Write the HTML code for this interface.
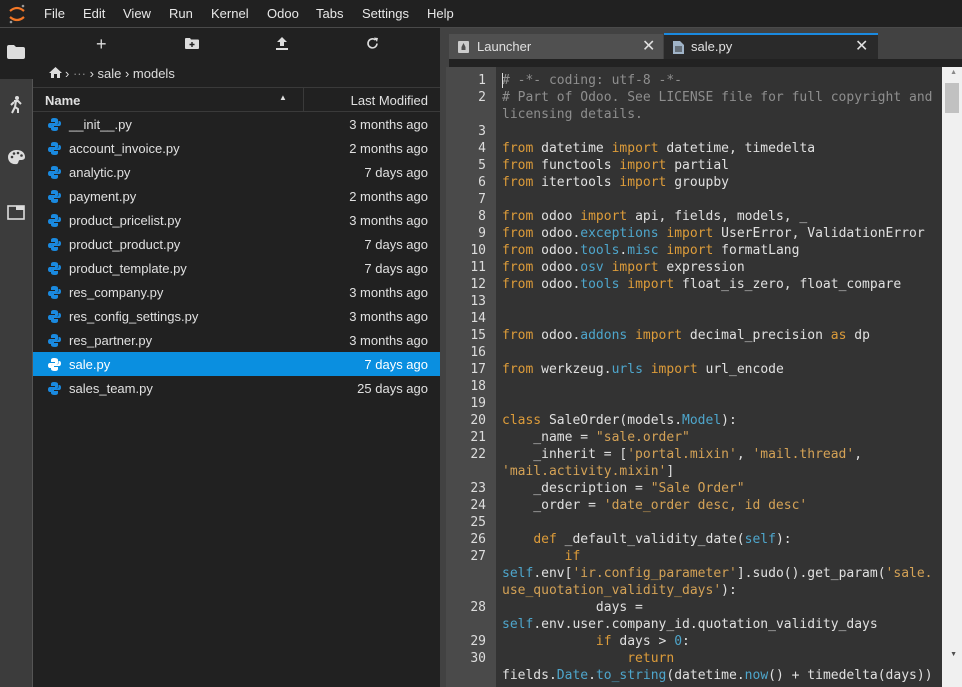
<!DOCTYPE html>
<html><head><meta charset="utf-8"><style>
*{margin:0;padding:0;box-sizing:border-box}
body{width:962px;height:687px;overflow:hidden;background:#212121;font-family:"Liberation Sans",sans-serif;color:#e0e0e0;position:relative}
.menu{position:absolute;left:0;top:0;width:962px;height:28px;background:#212121;border-bottom:1px solid #4a4a4a}
.menu span{position:absolute;top:6px;font-size:13px;color:#e8e8e8}
.lbar{position:absolute;left:0;top:28px;width:33px;height:659px;background:#3c3c3c;border-right:1px solid #555}
.lbar .act{position:absolute;left:0;top:0;width:33px;height:51px;background:#212121}
.fb{position:absolute;left:33px;top:28px;width:407px;height:659px;background:#212121}
.div{position:absolute;left:440px;top:28px;width:6px;height:659px;background:#424242}
.tabs{position:absolute;left:446px;top:28px;width:516px;height:39px;background:#424242}
.tab{position:absolute;top:5px;height:27px;font-size:13px;color:#e0e0e0}
.ed{position:absolute;left:446px;top:67px;width:516px;height:620px;background:#333}
.gut{position:absolute;left:0;top:0;width:50px;height:620px;background:#4a4a4a}
.code{position:absolute;left:56px;top:4.5px;font-family:"DejaVu Sans Mono",monospace;font-size:13px;line-height:17px;white-space:pre;color:#e0e0e0}
.nums{position:absolute;left:0;top:4.5px;width:40px;text-align:right;font-family:"DejaVu Sans Mono",monospace;font-size:13px;line-height:17px;white-space:pre;color:#ddd}
.k{color:#dd9c3a}.s{color:#d4a256}.c{color:#8e8e8e}.b{color:#4ea6cc}
.row{position:absolute;left:0;width:407px;height:24px;font-size:13px}
.row .n{position:absolute;left:36px;top:5px}
.row .d{position:absolute;right:12px;top:5px}
.row svg{position:absolute;left:15px;top:6px}
.sel{background:#0a8fe0;color:#fff}
</style></head><body>
<div class="menu">
<svg style="position:absolute;left:7px;top:3px" width="20" height="22" viewBox="0 0 20 22"><path d="M3 8 Q10 2 17 8" stroke="#f37726" stroke-width="2.2" fill="none"/><path d="M3 14 Q10 20 17 14" stroke="#f37726" stroke-width="2.2" fill="none"/><circle cx="16" cy="3" r="1.3" fill="#999"/><circle cx="4" cy="19" r="1.3" fill="#999"/></svg>
<span style="left:44px">File</span><span style="left:83px">Edit</span><span style="left:123px">View</span><span style="left:169px">Run</span><span style="left:211px">Kernel</span><span style="left:267px">Odoo</span><span style="left:316px">Tabs</span><span style="left:362px">Settings</span><span style="left:427px">Help</span>
</div>
<div class="lbar"><div class="act"></div>
<svg style="position:absolute;left:7px;top:17px" width="18" height="14"><path d="M0 2 Q0 0 2 0 H7 L9 2 H16 Q18 2 18 4 V12 Q18 14 16 14 H2 Q0 14 0 12Z" fill="#ddd"/></svg>
<svg style="position:absolute;left:8px;top:68px" width="16" height="18" viewBox="0 0 16 18"><circle cx="9" cy="2" r="2" fill="#ddd"/><path d="M6 5 L10 5 L13 8 M8 5 L7 11 L4 17 M7 11 L10 13 L10 17 M6 6 L3 9" stroke="#ddd" stroke-width="2" fill="none"/></svg>
<svg style="position:absolute;left:8px;top:122px" width="17" height="15" viewBox="0 0 17 15"><path d="M8.5 0 C14 0 17 3 17 7 C17 10 14 10 12 10 C10 10 11 13 9 14 C3 15 0 11 0 7 C0 3 4 0 8.5 0Z" fill="#ddd"/><circle cx="4" cy="7" r="1.3" fill="#3c3c3c"/><circle cx="6" cy="3.5" r="1.3" fill="#3c3c3c"/><circle cx="10" cy="3" r="1.3" fill="#3c3c3c"/><circle cx="13.5" cy="5.5" r="1.3" fill="#3c3c3c"/></svg>
<svg style="position:absolute;left:7px;top:177px" width="18" height="15"><rect x="1" y="1" width="16" height="13" fill="none" stroke="#ddd" stroke-width="1.6"/><rect x="9" y="1" width="8" height="4" fill="#ddd"/></svg>
</div>
<div class="fb">
<div style="position:absolute;left:63px;top:6px;font-size:18px;color:#ddd">+</div>
<svg style="position:absolute;left:152px;top:10px" width="14" height="11"><path d="M0 1 Q0 0 1 0 H5 L6 1.5 H13 Q14 1.5 14 2.5 V10 Q14 11 13 11 H1 Q0 11 0 10Z" fill="#ddd"/><path d="M7 4 V9 M4.5 6.5 H9.5" stroke="#212121" stroke-width="1.4"/></svg>
<svg style="position:absolute;left:243px;top:9px" width="12" height="13"><path d="M6 0 L11 5 H8 V9 H4 V5 H1Z M0 11 H12 V13 H0Z" fill="#ddd"/></svg>
<svg style="position:absolute;left:333px;top:9px" width="13" height="13" viewBox="0 0 13 13"><path d="M11 6.5 A4.5 4.5 0 1 1 9.5 3" stroke="#ddd" stroke-width="1.6" fill="none"/><path d="M8 0.5 L12 1 L11 5Z" fill="#ddd"/></svg>
<svg style="position:absolute;left:16px;top:39px" width="13" height="11"><path d="M6.5 0 L13 6 H11 V11 H8 V7 H5 V11 H2 V6 H0Z" fill="#ddd"/></svg>
<div style="position:absolute;left:32px;top:38px;font-size:13px;color:#ddd">› <span style="color:#888">···</span> › sale › models</div>
<div style="position:absolute;left:0;top:59px;width:407px;height:25px;border-top:1px solid #3a3a3a;border-bottom:1px solid #3a3a3a;font-size:13px">
<span style="position:absolute;left:12px;top:5px;font-weight:bold">Name</span>
<span style="position:absolute;left:246px;top:5px;font-size:8px">▲</span>
<div style="position:absolute;left:270px;top:0;width:1px;height:24px;background:#3a3a3a"></div>
<span style="position:absolute;right:12px;top:5px">Last Modified</span></div>
<div style="position:absolute;left:0;top:84px;width:407px">
<div class="row" style="top:0"><svg width="13" height="13" viewBox="0 0 13 13"><path d="M6 0 Q3 0 3 2 V4 H7 V5 H2 Q0 5 0 7.5 Q0 10 2 10 H3 V8 Q3 6.5 5 6.5 H8 Q10 6.5 10 5 V2 Q10 0 6 0Z" fill="#1a8ae0"/><path d="M7 13 Q10 13 10 11 V9 H6 V8 H11 Q13 8 13 5.5 Q13 3 11 3 H10.5 V5 Q10.5 6.5 8.5 6.5 H5 Q3 6.5 3 8 V11 Q3 13 7 13Z" fill="#1a8ae0"/></svg><span class="n">__init__.py</span><span class="d">3 months ago</span></div>
</div>
<div id="rows"></div>
</div>
<div class="div"></div>
<div class="tabs">
<div class="tab" style="left:3px;width:214px;background:#505050;top:6px"><svg style="position:absolute;left:9px;top:7px" width="11" height="12"><rect width="11" height="12" rx="1" fill="#ccc"/><path d="M5.5 2 L7.5 6 V9 H3.5 V6Z" fill="#505050"/></svg><span style="position:absolute;left:28px;top:5px">Launcher</span><span style="position:absolute;left:193px;top:2px;font-size:16px">✕</span></div>
<div class="tab" style="left:218px;width:214px;background:#2a2a2a;border-top:2px solid #1a8ae0;top:5px;height:28px"><svg style="position:absolute;left:9px;top:6px" width="11" height="13"><path d="M0 0 H7 L11 4 V13 H0Z" fill="#a0b4c8"/><path d="M2 6 H9 M2 8 H9 M2 10 H9" stroke="#2a2a2a"/></svg><span style="position:absolute;left:27px;top:4px">sale.py</span><span style="position:absolute;left:191px;top:1px;font-size:16px">✕</span></div>
<div style="position:absolute;left:3px;top:31px;width:513px;height:8px;background:#222"></div>
</div>
<div class="ed">
<div class="gut"></div>
<div class="nums">1
2

3
4
5
6
7
8
9
10
11
12
13
14
15
16
17
18
19
20
21
22

23
24
25
26
27


28

29
30</div>
<div class="code"><span class="c"># -*- coding: utf-8 -*-
# Part of Odoo. See LICENSE file for full copyright and
licensing details.</span>

<span class="k">from</span> datetime <span class="k">import</span> datetime, timedelta
<span class="k">from</span> functools <span class="k">import</span> partial
<span class="k">from</span> itertools <span class="k">import</span> groupby

<span class="k">from</span> odoo <span class="k">import</span> api, fields, models, _
<span class="k">from</span> odoo.<span class="b">exceptions</span> <span class="k">import</span> UserError, ValidationError
<span class="k">from</span> odoo.<span class="b">tools</span>.<span class="b">misc</span> <span class="k">import</span> formatLang
<span class="k">from</span> odoo.<span class="b">osv</span> <span class="k">import</span> expression
<span class="k">from</span> odoo.<span class="b">tools</span> <span class="k">import</span> float_is_zero, float_compare


<span class="k">from</span> odoo.<span class="b">addons</span> <span class="k">import</span> decimal_precision <span class="k">as</span> dp

<span class="k">from</span> werkzeug.<span class="b">urls</span> <span class="k">import</span> url_encode


<span class="k">class</span> SaleOrder(models.<span class="b">Model</span>):
    _name = <span class="s">"sale.order"</span>
    _inherit = [<span class="s">'portal.mixin'</span>, <span class="s">'mail.thread'</span>,
<span class="s">'mail.activity.mixin'</span>]
    _description = <span class="s">"Sale Order"</span>
    _order = <span class="s">'date_order desc, id desc'</span>

    <span class="k">def</span> _default_validity_date(<span class="b">self</span>):
        <span class="k">if</span>
<span class="b">self</span>.env[<span class="s">'ir.config_parameter'</span>].sudo().get_param(<span class="s">'sale.
use_quotation_validity_days'</span>):
            days =
<span class="b">self</span>.env.user.company_id.quotation_validity_days
            <span class="k">if</span> days &gt; <span class="b">0</span>:
                <span class="k">return</span>
fields.<span class="b">Date</span>.<span class="b">to_string</span>(datetime.<span class="b">now</span>() + timedelta(days))</div>
<div style="position:absolute;left:56px;top:6px;width:1px;height:15px;background:#ddd"></div>
<div style="position:absolute;right:0;top:0;width:20px;height:620px;background:#f0f0f0"></div>
<div style="position:absolute;right:3px;top:16px;width:14px;height:30px;background:#c1c1c1"></div>
<div style="position:absolute;right:5px;top:2px;font-size:7px;color:#888">▲</div>
<div style="position:absolute;right:5px;top:584px;font-size:7px;color:#505050">▼</div>
</div>
<script>
var f=[["account_invoice.py","2 months ago"],["analytic.py","7 days ago"],["payment.py","2 months ago"],["product_pricelist.py","3 months ago"],["product_product.py","7 days ago"],["product_template.py","7 days ago"],["res_company.py","3 months ago"],["res_config_settings.py","3 months ago"],["res_partner.py","3 months ago"],["sale.py","7 days ago"],["sales_team.py","25 days ago"]];
var ico=document.querySelector('.row svg').outerHTML;var h='';
f.forEach(function(r,i){var sel=r[0]=="sale.py";h+='<div class="row'+(sel?' sel':'')+'" style="top:'+(108+i*24)+'px">'+(sel?ico.replace(/#1a8ae0/g,'#fff'):ico)+'<span class="n">'+r[0]+'</span><span class="d">'+r[1]+'</span></div>';});
document.getElementById('rows').innerHTML=h;
</script>
</body></html>
